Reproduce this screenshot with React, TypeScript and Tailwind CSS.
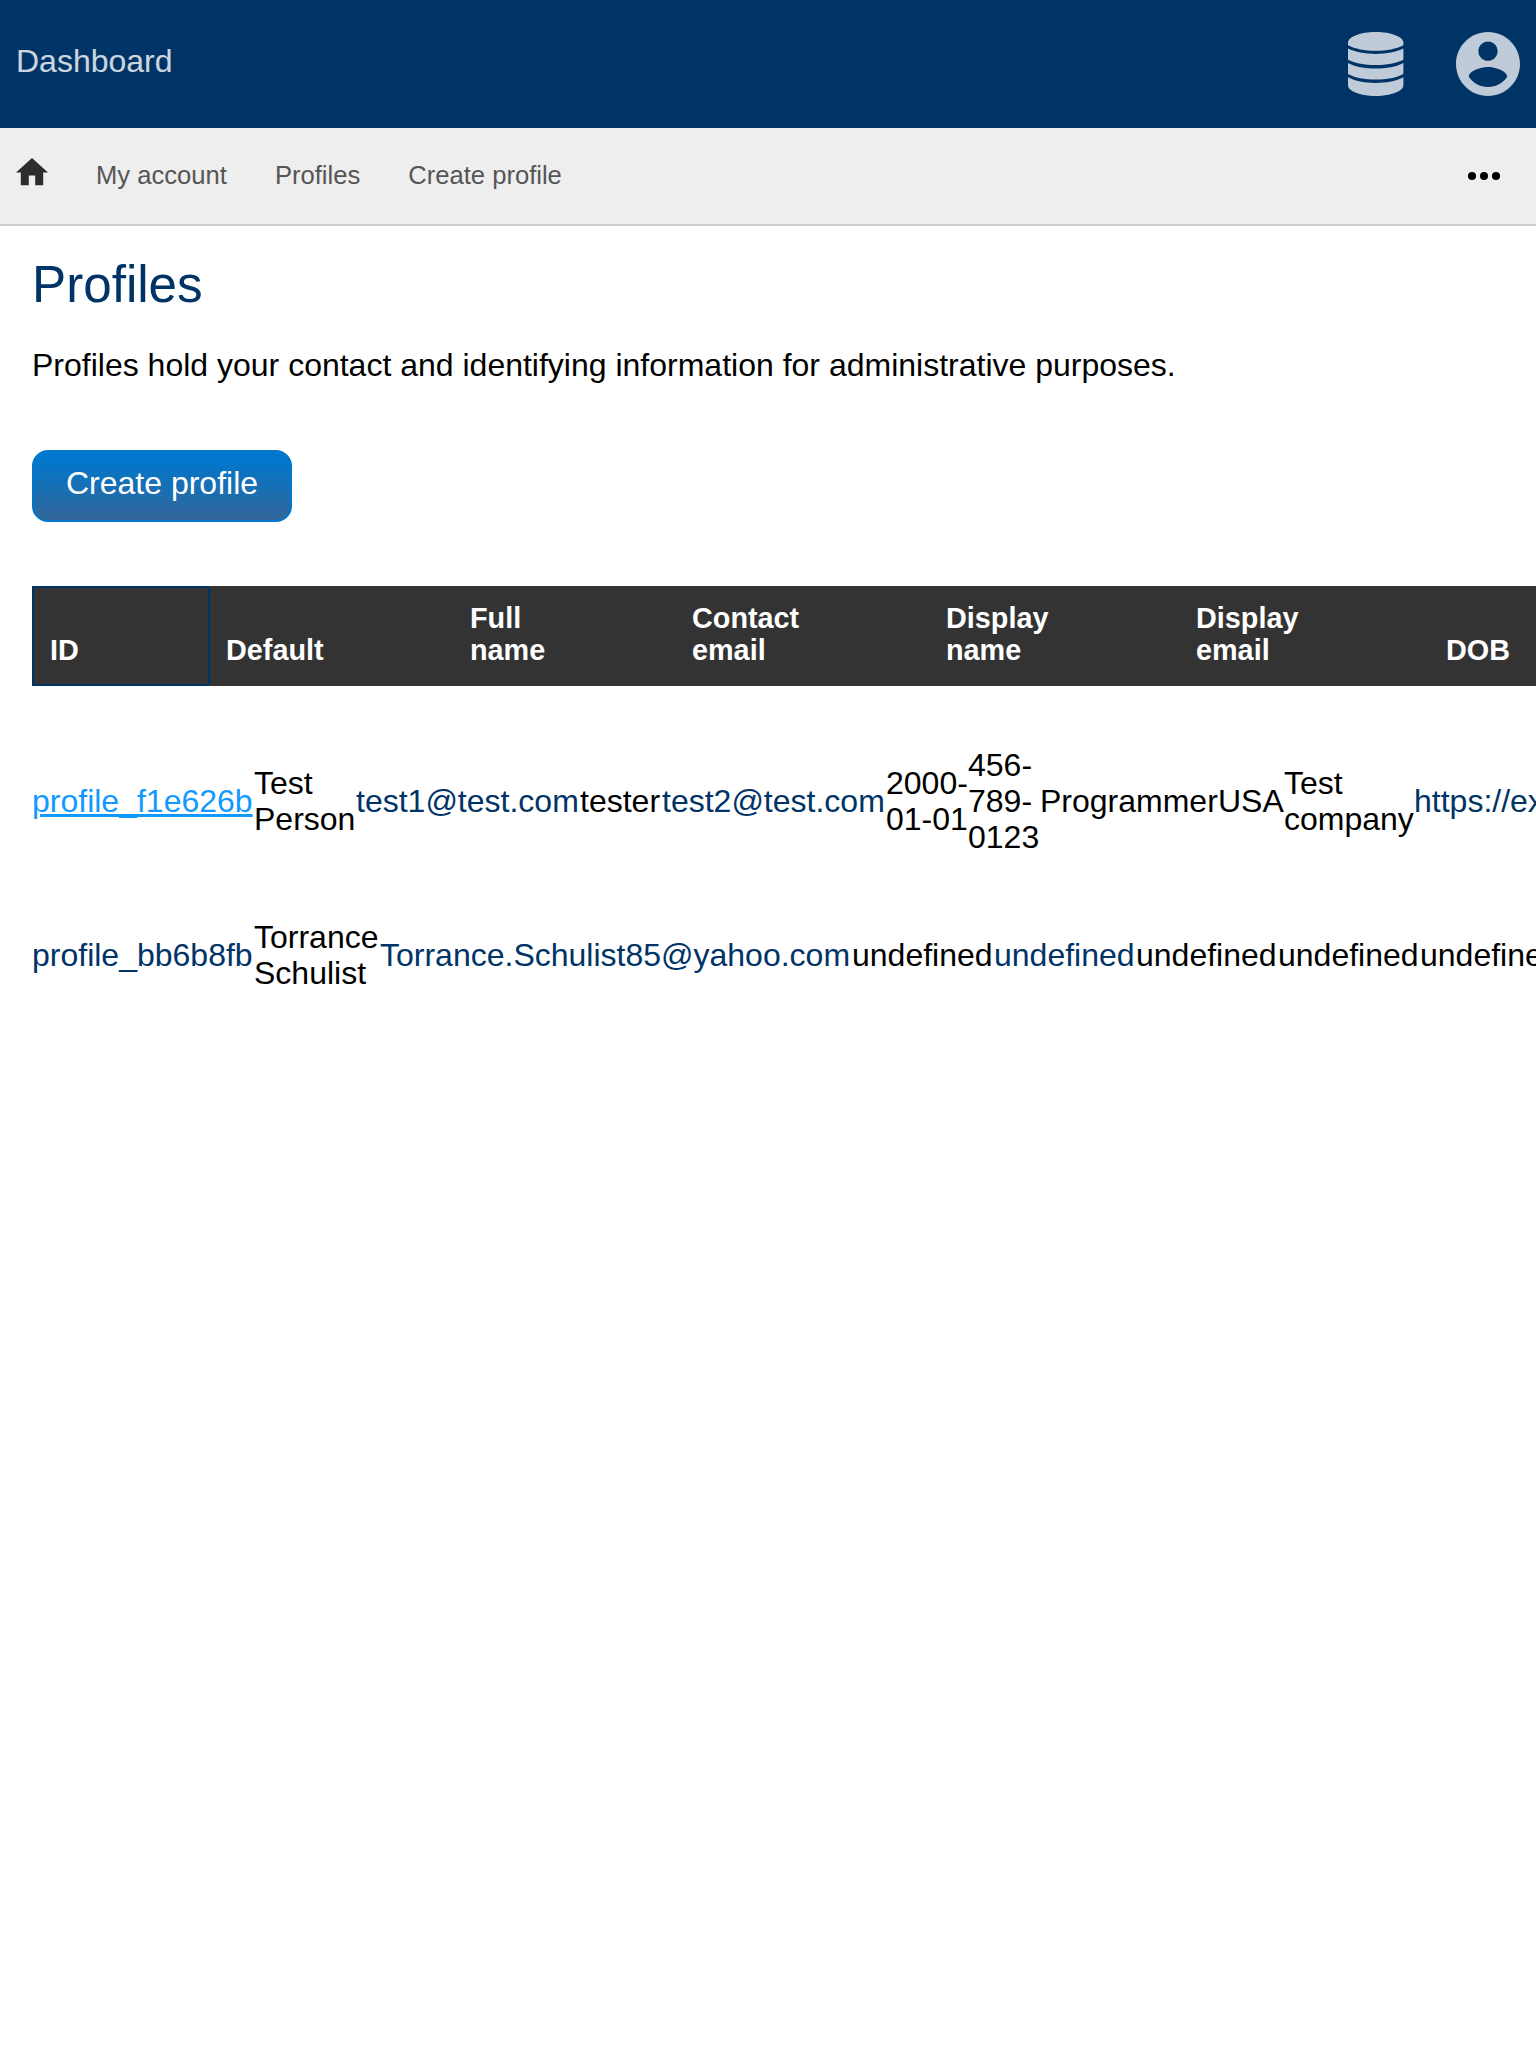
import React from "react";

const columns = [
  { label: "ID", cell: "w-[178px] border-2 border-[#036] px-4 pb-[18px]" },
  { label: "Default", cell: "w-[244px] px-4 pb-5" },
  { label: "Full name", cell: "w-[222px] pl-4 pr-24 pb-5" },
  { label: "Contact email", cell: "w-[254px] pl-4 pr-24 pb-5" },
  { label: "Display name", cell: "w-[250px] pl-4 pr-24 pb-5" },
  { label: "Display email", cell: "w-[250px] pl-4 pr-24 pb-5" },
  { label: "DOB", cell: "w-[184px] px-4 pb-5" },
];

type Cell = { text: string; width: string; link?: boolean; active?: boolean };

const rows: Cell[][] = [
  [
    { text: "profile_f1e626b", width: "w-[222px]", link: true, active: true },
    { text: "Test Person", width: "w-[102px]" },
    { text: "test1@test.com", width: "w-[224px]", link: true },
    { text: "tester", width: "w-[82px]" },
    { text: "test2@test.com", width: "w-[224px]", link: true },
    { text: "2000-01-01", width: "w-[82px]" },
    { text: "456-789-0123", width: "w-[72px]" },
    { text: "Programmer", width: "w-[178px]" },
    { text: "USA", width: "w-[66px]" },
    { text: "Test company", width: "w-[130px]" },
    { text: "https://example.com", width: "w-[290px]", link: true },
  ],
  [
    { text: "profile_bb6b8fb", width: "w-[222px]", link: true },
    { text: "Torrance Schulist", width: "w-[126px]" },
    { text: "Torrance.Schulist85@yahoo.com", width: "w-[472px]", link: true },
    { text: "undefined", width: "w-[142px]" },
    { text: "undefined", width: "w-[142px]", link: true },
    { text: "undefined", width: "w-[142px]" },
    { text: "undefined", width: "w-[142px]" },
    { text: "undefined", width: "w-[142px]" },
  ],
];

function tone(cell: Cell) {
  if (cell.active) return "text-[#1199ff] underline";
  return cell.link ? "text-[#036]" : "text-black";
}

export default function App() {
  return (
    <div className="min-h-[2048px] w-full overflow-hidden bg-white font-['Liberation_Sans',Arial,sans-serif] text-[32px] leading-[36px] text-black">
      <header className="flex h-32 items-center justify-between bg-[#036] px-4 text-white/80">
        <a className="-mt-1.5">Dashboard</a>
        <div className="flex items-center gap-[52px] text-white/75">
          <svg className="mx-[0.3px] h-16 w-[55.4px]" viewBox="0 0 56 64" preserveAspectRatio="none" fill="currentColor">
            <path d="M28 0C43.5 0 56 4.8 56 10.7V13.3C49 17 39 18.8 28 18.8S7 17 0 13.3V10.7C0 4.8 12.5 0 28 0z" />
            <path d="M0 16.6C7 20.2 17 21.9 28 21.9S49 20.2 56 16.6V27.7C49 31.3 39 33 28 33S7 31.3 0 27.7z" />
            <path d="M0 30.9C7 34.7 17 36.5 28 36.5S49 34.7 56 30.9V42C49 45.8 39 47.6 28 47.6S7 45.8 0 42z" />
            <path d="M0 45.2C7 49 17 50.9 28 50.9S49 49 56 45.2V53.3C56 59.2 43.5 64 28 64S0 59.2 0 53.3z" />
          </svg>
          <svg className="size-16" viewBox="2 2 20 20" fill="currentColor">
            <path d="M12 2C6.48 2 2 6.48 2 12s4.48 10 10 10 10-4.48 10-10S17.52 2 12 2zm0 3c1.66 0 3 1.34 3 3s-1.34 3-3 3-3-1.34-3-3 1.34-3 3-3zm0 14.2c-2.5 0-4.71-1.28-6-3.22.03-1.99 4-3.08 6-3.08 1.99 0 5.97 1.09 6 3.08-1.29 1.94-3.5 3.22-6 3.22z" />
          </svg>
        </div>
      </header>
      <nav className="flex h-[98px] items-center gap-12 border-b-2 border-[#ccc] bg-[#eee] pr-9 pl-4 text-[25.6px] text-[#555]">
        <svg className="-mt-2 h-[27.2px] w-8 text-[#2d2d2d]" viewBox="2 3 20 17" fill="currentColor">
          <path d="M10 20v-6h4v6h5v-8h3L12 3 2 12h3v8z" />
        </svg>
        <a className="-mt-0.5">My account</a>
        <a className="-mt-0.5">Profiles</a>
        <a className="-mt-0.5">Create profile</a>
        <svg className="ml-auto h-2 w-8 text-black" viewBox="0 0 32 8" fill="currentColor">
          <circle cx="4" cy="4" r="4" />
          <circle cx="16" cy="4" r="4" />
          <circle cx="28" cy="4" r="4" />
        </svg>
      </nav>
      <main className="px-8">
        <h1 className="mt-[30px] text-[51.2px] leading-[58px] text-[#036]">Profiles</h1>
        <p className="mt-[33px]">Profiles hold your contact and identifying information for administrative purposes.</p>
        <button className="mt-[67px] flex h-[72px] w-[260px] items-center justify-center rounded-2xl border-2 border-[#0077cc] bg-[linear-gradient(#0077cc_10%,#336699)] pb-1.5 text-white">
          Create profile
        </button>
        <div className="mt-16 flex h-[100px] w-max bg-[#333] text-[28.8px] leading-8 font-bold text-white">
          {columns.map((c) => (
            <div key={c.label} className={`flex shrink-0 items-end ${c.cell}`}>
              {c.label}
            </div>
          ))}
        </div>
        <div className="mt-[38px] w-max">
          {rows.map((row, i) => (
            <div key={i} className="flex h-[154px] items-center">
              {row.map((cell, j) => (
                <div key={j} className={`shrink-0 ${cell.width} ${tone(cell)}`}>
                  {cell.text}
                </div>
              ))}
            </div>
          ))}
        </div>
      </main>
    </div>
  );
}
